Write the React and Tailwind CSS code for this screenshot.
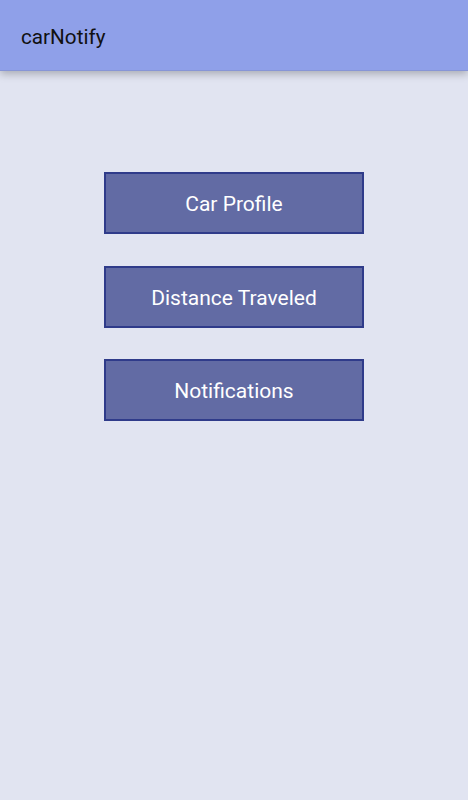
import React from 'react';

const items = ['Car Profile', 'Distance Traveled', 'Notifications'];

export default function App() {
    return (
        <div className="h-[800px] w-[468px] bg-[#e1e4f1] font-['Roboto',sans-serif] overflow-hidden">
            <header className="relative h-[71px] bg-[#8fa0e9] border-b border-[#8795d6] flex items-center px-[21px] shadow-[0_3px_8px_rgba(0,0,0,0.25)]">
                <h1 className="text-[20.7px] text-[#111] leading-none pt-[4px]">carNotify</h1>
            </header>

            <div className="flex flex-col items-center gap-[31.5px] pt-[101px]">
                {items.map((label) => (
                    <button
                        key={label}
                        className="w-[260px] h-[62px] bg-[#626ba4] border-2 border-[#2f3b8a] text-white text-[21px] leading-none pt-[3px] flex items-center justify-center"
                    >
                        {label}
                    </button>
                ))}
            </div>
        </div>
    );
}
